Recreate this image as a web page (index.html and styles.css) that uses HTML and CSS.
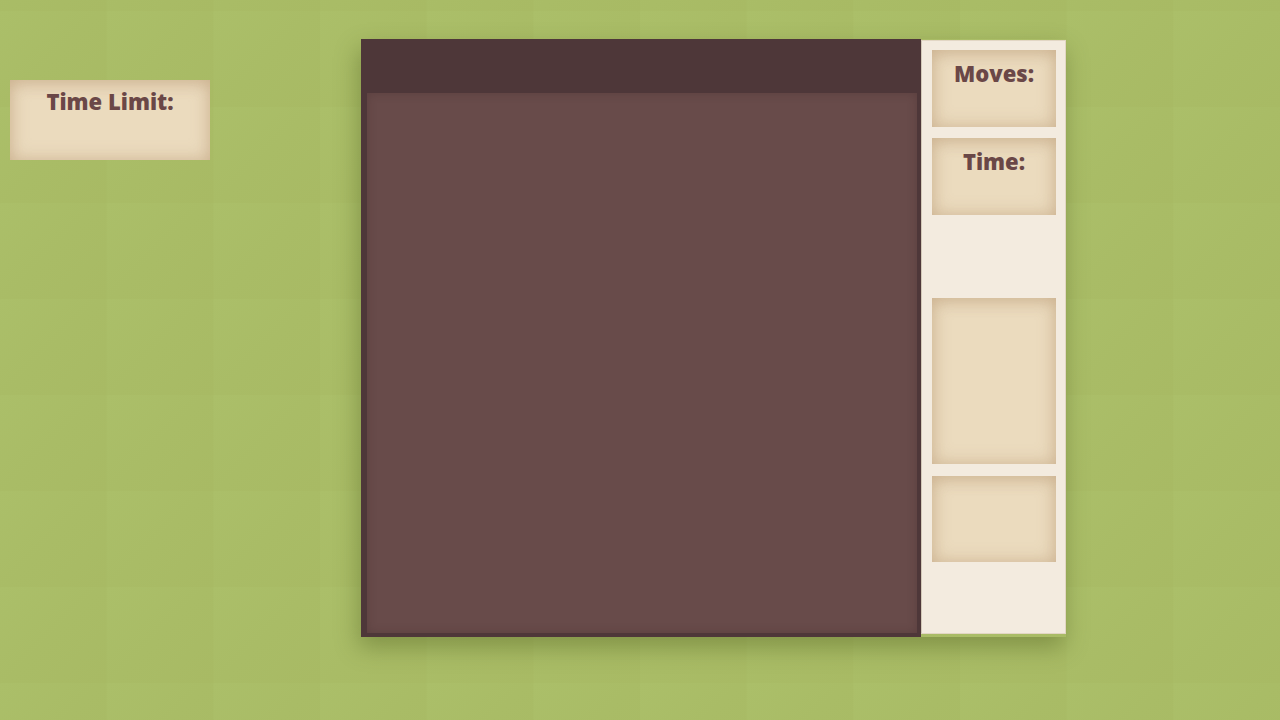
FILE: index.html
```html
<!DOCTYPE html>
<html>
<head>
<meta charset="utf-8">
<link rel="stylesheet" href="styles.css">
</head>
<body>
<div class="page">
  <div class="left">
    <div class="card limit"><h3 class="label">Time Limit:</h3></div>
  </div>
  <div class="game">
    <div class="board">
      <div class="board-head"></div>
      <div class="board-area"></div>
    </div>
    <div class="sidebar">
      <div class="card stat"><h3 class="label">Moves:</h3></div>
      <div class="card stat stat2"><h3 class="label">Time:</h3></div>
      <div class="card tall"></div>
      <div class="card short"></div>
    </div>
  </div>
</div>
</body>
</html>
```
FILE: styles.css
```css
html, body {
  margin: 0;
  padding: 0;
  width: 1280px;
  height: 720px;
  overflow: hidden;
}
body {
  background-color: #a9bc66;
  background-image: linear-gradient(135deg, #abbf69 0%, #a9bc66 50%, #a8ba64 100%);
  background-size: 106.667px 96px;
  background-position: 0 11px;
  font-family: "Open Sans", "DejaVu Sans", sans-serif;
}
.page {
  display: flex;
  align-items: flex-start;
}
.left {
  margin: 80px 0 0 10px;
  width: 200px;
}
.card {
  background: #ebdbbe;
  box-shadow: inset 0 0 18px rgba(160, 120, 80, 0.35), inset 0 6px 14px rgba(160, 120, 80, 0.15);
  box-sizing: border-box;
  text-align: center;
}
.label {
  margin: 0;
  font-weight: 800;
  font-size: 22px;
  line-height: 1;
  color: #6a4747;
}
.limit {
  height: 80px;
  padding-top: 10px;
}
.game {
  display: flex;
  align-items: flex-start;
  margin: 39px 0 0 151px;
  box-shadow: -2px 10px 22px rgba(70, 85, 25, 0.4);
}
.board {
  width: 560px;
  height: 598px;
  background: #4e3739;
  box-sizing: border-box;
  padding: 0 4px 4px 6px;
  display: flex;
  flex-direction: column;
}
.board-head {
  height: 54px;
}
.board-area {
  flex: 1;
  background: #684b4a;
  box-shadow: inset 0 0 10px rgba(60, 35, 35, 0.3);
}
.sidebar {
  margin-top: 1px;
  width: 145px;
  height: 594px;
  box-sizing: border-box;
  background: #f3ebdf;
  border: 1px solid #e2d6c4;
  border-left-color: #d3c9b8;
  padding: 9px 9px 0 10px;
  display: flex;
  flex-direction: column;
}
.stat {
  height: 77px;
  padding-top: 12px;
}
.stat2 {
  margin-top: 11px;
}
.tall {
  margin-top: 83px;
  height: 166px;
}
.short {
  margin-top: 12px;
  height: 86px;
}
```
